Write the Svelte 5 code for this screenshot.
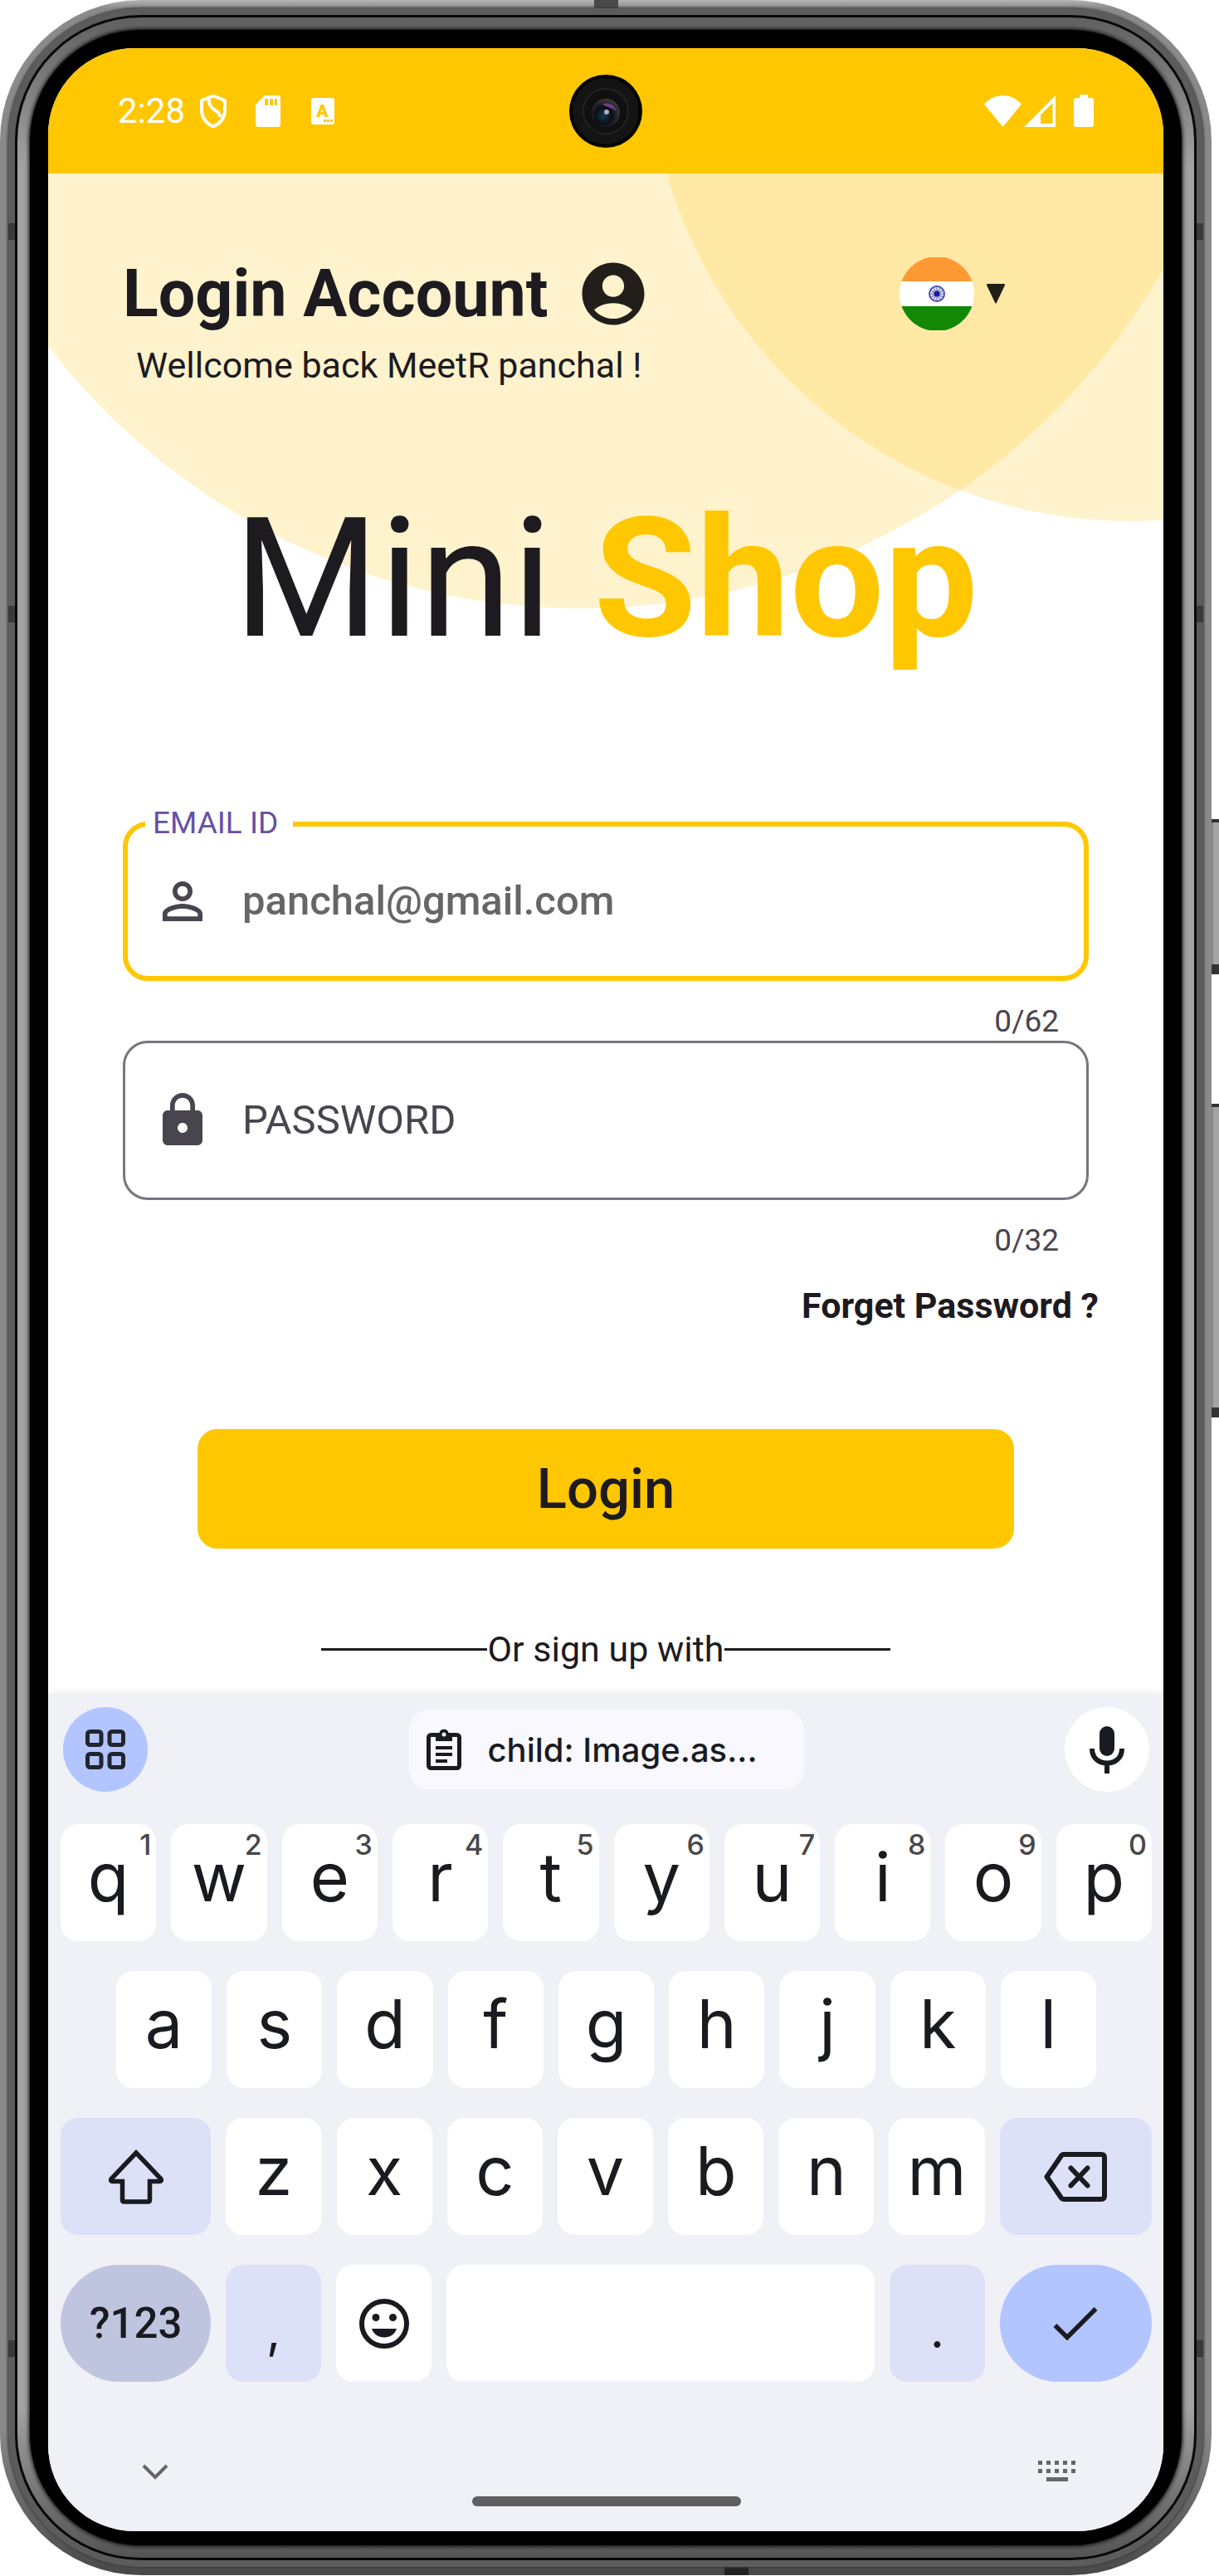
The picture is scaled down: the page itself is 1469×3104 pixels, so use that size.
<script>
  const digits = ['1', '2', '3', '4', '5', '6', '7', '8', '9', '0'];
  const topRow = 'qwertyuiop'.split('').map((letter, i) => ({ letter, hint: digits[i] }));
  const homeRow = 'asdfghjkl'.split('');
  const bottomRow = 'zxcvbnm'.split('');
  const dots = [0, 1, 2, 3, 4];
  const spokes = Array.from({ length: 12 }, (_, i) => i * 30);

  let email = $state('');
  let password = $state('');
</script>

<div class="stage">
  <span class="side-button volume"></span>
  <span class="side-button power"></span>
  <div class="rim">
    <div class="band">
      <div class="groove">
        <div class="lip">
          <div class="bezel">
            <div class="screen">
              <header class="status">
                <div class="status-left">
                  <span class="time">2:28</span>
                  <svg class="shield" viewBox="0 0 34 42" aria-hidden="true">
                    <path d="M17 2.500 31 8v11c0 9-5 16.500-14 20.500C8 35.500 3 28 3 19V8z" fill="none" stroke="#fff" stroke-width="4" stroke-linejoin="round" />
                    <path d="M12 5c-2 16 14 14 13 23" fill="none" stroke="#fff" stroke-width="4" />
                  </svg>
                  <svg class="sd" viewBox="0 0 30 38" aria-hidden="true">
                    <path fill="#fff" fill-rule="evenodd" d="M11 0h16a3 3 0 0 1 3 3v32a3 3 0 0 1-3 3H3a3 3 0 0 1-3-3V11zM11 4v8h4V4zm6 0v8h4V4zm6 0v8h3V4z" />
                  </svg>
                  <svg class="lang" viewBox="0 0 28 32" aria-hidden="true">
                    <rect width="28" height="32" rx="3" fill="#fff" />
                    <text x="13.500" y="23" text-anchor="middle" font-family="Roboto, sans-serif" font-size="21" font-weight="900" fill="#ffc700">A</text>
                    <path d="M15 26h3v3h-3zM19 26h3v3h-3zM23 26h3v3h-3z" fill="#ffc700" />
                  </svg>
                </div>
                <svg class="camera" viewBox="0 0 88 88" aria-hidden="true">
                  <defs>
                    <radialGradient id="lens" cx="0.42" cy="0.6" r="0.6">
                      <stop offset="0" stop-color="#123a4c" />
                      <stop offset="0.500" stop-color="#0c0d16" />
                      <stop offset="1" stop-color="#3a3a3e" />
                    </radialGradient>
                  </defs>
                  <circle cx="44" cy="44" r="44" fill="#000" />
                  <circle cx="44" cy="44" r="40" fill="#141414" />
                  <circle cx="44" cy="44" r="27" fill="#101010" stroke="#222" stroke-width="2" />
                  <circle cx="44" cy="46" r="17" fill="url(#lens)" />
                  <path d="M40 36c6-4 15 0 17 8-5-4-11-5-17-8z" fill="#6e3f86" />
                  <circle cx="45" cy="45" r="3" fill="#b9a5cc" />
                </svg>
                <div class="status-right">
                  <svg class="wifi" viewBox="0 0 45 38" aria-hidden="true"><path fill="#fff" d="M0 10.500C12-3.500 33-3.500 45 10.500L22.500 38z" /></svg>
                  <svg class="signal" viewBox="0 0 38 38" aria-hidden="true"><path fill="#fff" fill-rule="evenodd" d="M38 0v38H0zM34.500 9 20 23.500V34h14.500z" /></svg>
                  <svg class="battery" viewBox="0 0 24 39" aria-hidden="true"><path fill="#fff" d="M7 0h10v4h4a3 3 0 0 1 3 3v29a3 3 0 0 1-3 3H3a3 3 0 0 1-3-3V7a3 3 0 0 1 3-3h4z" /></svg>
                </div>
              </header>

              <main class="page">
                <svg class="bubbles" viewBox="0 0 1344 524" aria-hidden="true">
                  <circle cx="641" cy="-284" r="808" />
                  <circle cx="1304" cy="-163" r="582" />
                </svg>

                <div class="heading">
                  <h2>Login Account</h2>
                  <svg class="account" viewBox="0 0 24 24" aria-hidden="true">
                    <path fill="#221f1a" d="M12 2C6.480 2 2 6.480 2 12s4.480 10 10 10 10-4.480 10-10S17.520 2 12 2zm0 4c1.930 0 3.500 1.570 3.500 3.500S13.930 13 12 13s-3.500-1.570-3.500-3.500S10.070 6 12 6zm0 14c-2.030 0-4.430-.82-6.140-2.880C7.550 15.800 9.680 15 12 15s4.450.8 6.140 2.120C16.430 19.180 14.030 20 12 20z" />
                  </svg>
                  <button class="country" type="button" aria-label="Country: India">
                    <svg class="flag" viewBox="0 0 90 88" aria-hidden="true">
                      <clipPath id="disc"><ellipse cx="45" cy="44" rx="45" ry="45" /></clipPath>
                      <g clip-path="url(#disc)">
                        <rect width="90" height="88" fill="#fff" />
                        <rect width="90" height="29" fill="#ff9933" />
                        <rect y="59" width="90" height="29" fill="#128807" />
                      </g>
                      <circle cx="45" cy="44" r="9" fill="#e6e6f6" stroke="#4a4ab4" stroke-width="2" />
                      {#each spokes as angle}
                        <path d="M45 44V36.500" stroke="#5a5abc" stroke-width="1" transform="rotate({angle} 45 44)" />
                      {/each}
                      <circle cx="45" cy="44" r="3.500" fill="#1d1d9c" />
                    </svg>
                    <svg class="caret" viewBox="0 0 22 24" aria-hidden="true"><path fill="#221f1a" d="M1 0h20q1.500.5.8 2L11.800 23q-.8 1.500-1.600 0L.2 2Q-.5.5 1 0z" /></svg>
                  </button>
                </div>
                <p class="welcome">Wellcome back MeetR panchal !</p>

                <h1>Mini <strong>Shop</strong></h1>

                <form onsubmit={(e) => e.preventDefault()}>
                  <div class="group">
                    <div class="field active">
                      <label for="email">EMAIL ID</label>
                      <svg class="field-icon" viewBox="0 0 24 24" aria-hidden="true">
                        <path d="M12 5.900c1.160 0 2.100.94 2.100 2.100s-.94 2.100-2.100 2.100S9.900 9.160 9.900 8s.94-2.100 2.100-2.100m0 9c2.970 0 6.100 1.460 6.100 2.100v1.100H5.900V17c0-.64 3.130-2.100 6.100-2.100M12 4C9.790 4 8 5.790 8 8s1.790 4 4 4 4-1.790 4-4-1.790-4-4-4zm0 9c-2.670 0-8 1.340-8 4v3h16v-3c0-2.660-5.330-4-8-4z" />
                      </svg>
                      <input id="email" type="text" inputmode="email" maxlength="62" placeholder="panchal@gmail.com" bind:value={email} />
                    </div>
                    <span class="counter">{email.length}/62</span>
                  </div>
                  <div class="group">
                    <div class="field">
                      <svg class="field-icon" viewBox="0 0 24 24" aria-hidden="true">
                        <path d="M18 8h-1V6c0-2.760-2.240-5-5-5S7 3.240 7 6v2H6c-1.100 0-2 .9-2 2v10c0 1.100.9 2 2 2h12c1.100 0 2-.9 2-2V10c0-1.100-.9-2-2-2zm-6 9c-1.100 0-2-.9-2-2s.9-2 2-2 2 .9 2 2-.9 2-2 2zm3.100-9H8.900V6c0-1.710 1.390-3.100 3.100-3.100 1.710 0 3.100 1.390 3.100 3.100v2z" />
                      </svg>
                      <input type="password" maxlength="32" placeholder="PASSWORD" aria-label="PASSWORD" bind:value={password} />
                    </div>
                    <span class="counter">{password.length}/32</span>
                  </div>
                  <a class="forget" href="#forget">Forget Password ?</a>
                  <button class="login" type="submit">Login</button>
                </form>

                <div class="divider">
                  <span class="rule"></span>
                  <span>Or sign up with</span>
                  <span class="rule"></span>
                </div>
              </main>

              <section class="keyboard" aria-label="Keyboard">
                <div class="toolbar">
                  <button class="round blue" type="button" aria-label="Keyboard features">
                    <svg class="apps" viewBox="0 0 48 48" aria-hidden="true">
                      <g fill="none" stroke="#22252f" stroke-width="5">
                        <rect x="2.500" y="2.500" width="16.500" height="16" rx="3" />
                        <rect x="29" y="2.500" width="16.500" height="16" rx="3" />
                        <rect x="2.500" y="29.500" width="16.500" height="16" rx="3" />
                        <rect x="29" y="29.500" width="16.500" height="16" rx="3" />
                      </g>
                    </svg>
                  </button>
                  <button class="clip" type="button">
                    <svg class="clipboard" viewBox="0 0 42 50" aria-hidden="true">
                      <rect x="2.500" y="7.500" width="37" height="40" rx="3" fill="none" stroke="#1a1b20" stroke-width="5" />
                      <path fill="#1a1b20" d="M11 5h4.500a5.700 5.700 0 0 1 11 0H31v10H11zM11 21h20v4H11zM11 29h20v4H11zM11 37h14v4H11z" />
                      <circle cx="21" cy="7" r="2.500" fill="#f9f8ff" />
                    </svg>
                    <span>child: Image.as...</span>
                  </button>
                  <button class="round white" type="button" aria-label="Voice input">
                    <svg class="mic" viewBox="0 0 42 57" aria-hidden="true">
                      <rect x="12" width="18" height="36" rx="9" fill="#1a1b20" />
                      <path d="M3 27c0 11.500 8 17.500 18 17.500S39 38.500 39 27M21 44v13" fill="none" stroke="#1a1b20" stroke-width="6" />
                    </svg>
                  </button>
                </div>

                <div class="rows">
                  <div class="row">
                    {#each topRow as key}
                      <button class="key" type="button">{key.letter}<small>{key.hint}</small></button>
                    {/each}
                  </div>
                  <div class="row home">
                    {#each homeRow as letter}
                      <button class="key" type="button">{letter}</button>
                    {/each}
                  </div>
                  <div class="row edge">
                    <button class="key tint" type="button" aria-label="Shift">
                      <svg class="shift" viewBox="0 0 68 66" aria-hidden="true">
                        <path d="M34 4 64 35.500q1.500 3-2 3H50.500V61q0 2-2 2h-29q-2 0-2-2V38.500H6q-3.500 0-2-3z" fill="none" stroke="#1a1b20" stroke-width="5.500" />
                      </svg>
                    </button>
                    {#each bottomRow as letter}
                      <button class="key" type="button">{letter}</button>
                    {/each}
                    <button class="key tint" type="button" aria-label="Backspace">
                      <svg class="backspace" viewBox="0 0 76 60" aria-hidden="true">
                        <path d="M24 3h45q4 0 4 4v46q0 4-4 4H24q-2.500 0-4-3L3.500 30 20 6q1.500-3 4-3z" fill="none" stroke="#1a1b20" stroke-width="6" stroke-linejoin="round" />
                        <path d="M32.500 19.500l20 21m0-21l-20 21" fill="none" stroke="#1a1b20" stroke-width="6" stroke-linecap="round" />
                      </svg>
                    </button>
                  </div>
                  <div class="row last">
                    <button class="key pill mode" type="button">?123</button>
                    <button class="key tint mark" type="button">,</button>
                    <button class="key" type="button" aria-label="Emoji">
                      <svg class="emoji" viewBox="0 0 60 60" aria-hidden="true">
                        <circle cx="30" cy="30" r="27" fill="none" stroke="#1a1b20" stroke-width="6" />
                        <circle cx="20" cy="22.500" r="4.500" fill="#1a1b20" />
                        <circle cx="40.500" cy="22.500" r="4.500" fill="#1a1b20" />
                        <path d="M15 36h30c-2 6.500-8 10.500-15 10.500S17 42.500 15 36z" fill="#1a1b20" />
                      </svg>
                    </button>
                    <button class="key space" type="button" aria-label="Space"></button>
                    <button class="key tint mark" type="button">.</button>
                    <button class="key pill done" type="button" aria-label="Done">
                      <svg class="check" viewBox="0 0 54 40" aria-hidden="true"><path d="M2.500 22 17 36.500 51.500 2" fill="none" stroke="#1a1b20" stroke-width="5.500" /></svg>
                    </button>
                  </div>
                </div>

                <div class="nav">
                  <button type="button" aria-label="Hide keyboard">
                    <svg viewBox="0 0 48 48" aria-hidden="true"><path d="M10 17l14 14 14-14" fill="none" stroke="#666" stroke-width="4" /></svg>
                  </button>
                  <button type="button" aria-label="Switch keyboard">
                    <svg viewBox="0 0 48 48" aria-hidden="true">
                      {#each dots as i}
                        <rect x={1 + i * 10} y="11" width="5" height="5" fill="#666" />
                        <rect x={1 + i * 10} y="21" width="5" height="5" fill="#666" />
                      {/each}
                      <rect x="11" y="31" width="26" height="5" fill="#666" />
                    </svg>
                  </button>
                </div>
                <div class="handle"></div>
              </section>
            </div>
          </div>
        </div>
      </div>
    </div>
  </div>
</div>

<style>
  :global(body) {
    margin: 0;
    background: #fff;
  }
  .stage,
  .stage * {
    box-sizing: border-box;
  }
  .stage {
    position: relative;
    padding-right: 9px;
    font-family: Roboto, 'Liberation Sans', sans-serif;
    color: #1d1b20;
  }
  button {
    border: 0;
    padding: 0;
    margin: 0;
    background: none;
    font: inherit;
    color: inherit;
    cursor: pointer;
  }
  svg {
    display: block;
    flex: none;
  }

  /* device shell */
  .side-button {
    position: absolute;
    right: 0;
    width: 9px;
    background: linear-gradient(90deg, #7c7c7c, #a4a4a4 3px);
    border-top: 4px solid #333;
    border-bottom: 12px solid #333;
  }
  .volume {
    top: 987px;
    height: 187px;
  }
  .power {
    top: 1330px;
    height: 378px;
  }
  .rim {
    padding: 10px;
    border-radius: 170px;
    background:
      linear-gradient(#4a4a4a, #4a4a4a) 50% 0 / 29px 18px no-repeat,
      linear-gradient(#222, #222) 61% 100% / 29px 10px no-repeat,
      linear-gradient(#b4b4b4, #8a8a8a 10px, #8a8a8a 180px, #8a8a8a calc(100% - 180px), #484848);
  }
  .band {
    padding: 8px;
    border-radius: 160px;
    background:
      linear-gradient(#3a3a3a, #3a3a3a) 0 259px / 100% 20px no-repeat,
      linear-gradient(#3a3a3a, #3a3a3a) 0 720px / 100% 20px no-repeat,
      linear-gradient(#3a3a3a, #3a3a3a) 0 calc(100% - 253px) / 100% 20px no-repeat,
      #5c5c5c;
    box-shadow: 0 0 3px 1px #3c3c3c;
  }
  .groove {
    padding: 3px;
    border-radius: 152px;
    background: #080808;
  }
  .lip {
    padding: 15px;
    border-radius: 149px;
    background: linear-gradient(#606060, #a2a2a2 180px, #a2a2a2 calc(100% - 180px), #545454);
  }
  .bezel {
    padding: 22px 22px 17px;
    border-radius: 134px;
    background: #000;
    box-shadow: 0 0 5px 1px #000;
  }
  .screen {
    overflow: hidden;
    border-radius: 104px;
    background: #fff;
  }

  /* status bar */
  .status {
    display: grid;
    grid-template-columns: 1fr auto 1fr;
    align-items: center;
    height: 151px;
    padding: 0 84px;
    background: #ffc700;
  }
  .status-left,
  .status-right {
    display: flex;
    align-items: center;
  }
  .status-right {
    justify-content: flex-end;
  }
  .time {
    margin-right: 17px;
    font-size: 42px;
    line-height: 50px;
    color: #fff;
  }
  .shield {
    width: 34px;
    margin-right: 34px;
  }
  .sd {
    width: 30px;
    margin-right: 37px;
  }
  .lang {
    width: 28px;
  }
  .camera {
    width: 88px;
  }
  .wifi {
    width: 45px;
    margin-right: 3px;
  }
  .signal {
    width: 38px;
    margin-right: 22px;
  }
  .battery {
    width: 24px;
  }

  /* login page */
  .page {
    position: relative;
    padding: 100px 90px 30px;
  }
  .bubbles {
    position: absolute;
    top: 0;
    left: 0;
    width: 100%;
    fill: #ffc105;
    fill-opacity: 0.2;
  }
  .heading,
  .welcome,
  h1 {
    position: relative;
  }
  .heading {
    display: flex;
    align-items: center;
  }
  h2 {
    margin: 0;
    font-size: 79px;
    font-weight: 700;
    line-height: 90px;
  }
  .account {
    width: 90px;
    margin-left: 33px;
  }
  .country {
    display: flex;
    align-items: center;
    gap: 15px;
    margin-left: auto;
    margin-right: 101px;
  }
  .flag {
    width: 90px;
  }
  .caret {
    width: 22px;
  }
  .welcome {
    margin: 16px 0 0 16px;
    font-size: 43px;
    line-height: 50px;
  }
  h1 {
    margin: 115px 0 0;
    font-size: 201px;
    font-weight: 400;
    line-height: 236px;
    text-align: center;
  }
  h1 strong {
    font-weight: 700;
    color: #ffc700;
  }
  form {
    display: flex;
    flex-direction: column;
    margin-top: 174px;
  }
  .group {
    display: flex;
    flex-direction: column;
  }
  .group + .group {
    margin-top: 2px;
  }
  .field {
    position: relative;
    display: flex;
    align-items: center;
    gap: 36px;
    height: 192px;
    padding: 0 33px;
    border: 3px solid #79747e;
    border-radius: 30px;
  }
  .field.active {
    padding: 0 30px;
    border: 6px solid #ffc700;
  }
  .field label {
    position: absolute;
    top: -25px;
    left: 21px;
    padding: 0 18px 0 9px;
    background: #fff;
    font-size: 37px;
    line-height: 42px;
    color: #6750a4;
  }
  .field-icon {
    width: 72px;
    fill: #49454f;
  }
  input {
    flex: 1;
    min-width: 0;
    padding: 0;
    border: 0;
    outline: 0;
    background: none;
    font: 400 49px/60px Roboto, 'Liberation Sans', sans-serif;
    color: #1d1b20;
  }
  input::placeholder {
    color: #49454f;
    opacity: 1;
  }
  .active input {
    font-weight: 500;
  }
  .active input::placeholder {
    color: #666;
  }
  .counter {
    align-self: flex-end;
    padding: 28px 36px 0 0;
    font-size: 37px;
    line-height: 42px;
    color: #49454f;
  }
  .forget {
    align-self: flex-end;
    margin: 32px -12px 0 0;
    font-size: 43px;
    font-weight: 700;
    line-height: 50px;
    color: inherit;
    text-decoration: none;
  }
  .login {
    height: 144px;
    margin: 124px 90px 0;
    border-radius: 24px;
    background: #ffc700;
    font-size: 67px;
    font-weight: 500;
  }
  .divider {
    display: flex;
    align-items: center;
    justify-content: center;
    margin-top: 96px;
    font-size: 43px;
    line-height: 50px;
  }
  .rule {
    width: 200px;
    height: 3px;
    background: #1d1b20;
  }

  /* keyboard */
  .keyboard {
    position: relative;
    padding: 15px 14px 30px 15px;
    background: #f0f0f7;
    box-shadow: 0 -2px 8px rgba(0, 0, 0, 0.08);
    font-family: Inter, Roboto, sans-serif;
    color: #1a1b20;
  }
  .toolbar {
    display: flex;
    align-items: center;
    justify-content: space-between;
    padding: 0 3px;
  }
  .round {
    display: grid;
    place-items: center;
    width: 102px;
    height: 102px;
    border-radius: 50%;
  }
  .blue {
    background: #b2c5ff;
  }
  .white {
    background: #fff;
  }
  .apps {
    width: 48px;
  }
  .mic {
    width: 42px;
  }
  .clip {
    display: flex;
    align-items: center;
    gap: 32px;
    width: 476px;
    height: 96px;
    padding: 0 21px;
    border-radius: 24px;
    background: #f9f8ff;
    font-size: 40px;
    font-weight: 500;
    white-space: nowrap;
  }
  .clipboard {
    width: 42px;
  }
  .rows {
    display: flex;
    flex-direction: column;
    gap: 36px;
    margin-top: 39px;
  }
  .row {
    display: grid;
    grid-template-columns: repeat(10, 1fr);
    gap: 18px;
  }
  .home {
    grid-template-columns: repeat(9, 1fr);
    padding: 0 67px;
  }
  .edge {
    grid-template-columns: 181fr repeat(7, 115fr) 183fr;
  }
  .last {
    grid-template-columns: 181fr 115fr 115fr 515fr 115fr 183fr;
  }
  .key {
    position: relative;
    display: flex;
    align-items: center;
    justify-content: center;
    min-width: 0;
    height: 141px;
    padding-bottom: 14px;
    border-radius: 21px;
    background: #fff;
    font-size: 81px;
    line-height: 98px;
  }
  .key:has(svg) {
    padding-bottom: 0;
  }
  .key small {
    position: absolute;
    top: 4px;
    right: 6px;
    font-size: 34px;
    font-weight: 500;
    line-height: 42px;
    color: #47474c;
  }
  .tint {
    background: #dde1f8;
  }
  .pill {
    border-radius: 71px;
    padding: 0;
  }
  .mode {
    background: #c0c5df;
    font-family: Roboto, sans-serif;
    font-size: 51px;
    font-weight: 500;
  }
  .done {
    background: #b2c5ff;
  }
  .mark {
    padding: 14px 0 0;
    font-size: 60px;
  }
  .shift {
    width: 68px;
  }
  .backspace {
    width: 76px;
  }
  .emoji {
    width: 60px;
  }
  .check {
    width: 54px;
  }
  .nav {
    display: flex;
    justify-content: space-between;
    padding: 84px 90px 0;
  }
  .nav svg {
    width: 48px;
  }
  .handle {
    width: 324px;
    height: 12px;
    margin: 6px auto 0;
    border-radius: 6px;
    background: #5f5f62;
  }
</style>
